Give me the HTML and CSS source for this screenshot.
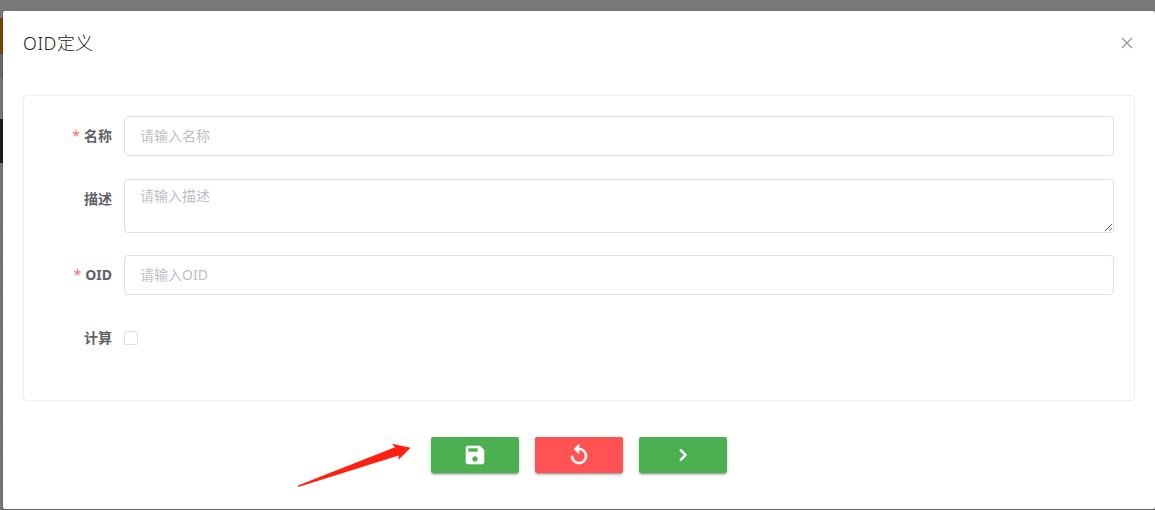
FILE: index.html
```
<!DOCTYPE html>
<html lang="zh-CN">
<head>
<meta charset="utf-8">
<title>OID定义</title>
<link rel="stylesheet" href="styles.css">
</head>
<body>
<main class="dialog">
  <header class="dialog-header">
    <h1 class="title"><span class="latin">OID</span>定义</h1>
    <button class="close" aria-label="关闭"><svg width="12" height="12" viewBox="0 0 12 12"><path d="M1 1l10 10M11 1L1 11" fill="none" stroke="#909399" stroke-width="1.2"/></svg></button>
  </header>
  <form class="card">
    <div class="row row-name">
      <label class="label required" for="name">名称</label>
      <input class="field" id="name" placeholder="请输入名称">
    </div>
    <div class="row row-desc">
      <label class="label" for="desc">描述</label>
      <textarea class="field area" id="desc" placeholder="请输入描述"></textarea>
    </div>
    <div class="row row-oid">
      <label class="label required" for="oid">OID</label>
      <input class="field" id="oid" placeholder="请输入OID">
    </div>
    <div class="row row-calc">
      <label class="label" for="calc">计算</label>
      <input class="check" type="checkbox" id="calc">
    </div>
  </form>
  <footer class="actions">
    <button class="btn green" aria-label="保存"><svg class="icon" width="24" height="24" viewBox="0 0 24 24"><path d="M17 3H5c-1.110 0-2 .9-2 2v14c0 1.100.89 2 2 2h14c1.100 0 2-.9 2-2V7l-4-4zm-5 16c-1.660 0-3-1.340-3-3s1.340-3 3-3 3 1.340 3 3-1.340 3-3 3zm3-10H5V5h10v4z"/></svg></button>
    <button class="btn red" aria-label="重置"><svg class="icon" width="24" height="24" viewBox="0 0 24 24"><path d="M12 5V1L7 6l5 5V7c3.310 0 6 2.690 6 6s-2.690 6-6 6-6-2.690-6-6H4c0 4.420 3.580 8 8 8s8-3.580 8-8-3.580-8-8-8z"/></svg></button>
    <button class="btn green" aria-label="下一步"><svg class="icon" width="24" height="24" viewBox="0 0 24 24"><path d="M10 6L8.590 7.410 13.170 12l-4.580 4.590L10 18l6-6z"/></svg></button>
  </footer>
  <svg class="arrow" width="114" height="46" viewBox="0 0 114 46"><path fill="#ff2010" d="M0 42.500L97 4.300 94 .8 112.500 4.800 100.500 16.700 100.700 12.600 .3 44z"/></svg>
</main>
</body>
</html>
```
FILE: styles.css
```
* { box-sizing: border-box; }
body {
  margin: 0;
  padding: 11px 0 1px 3px;
  height: 510px;
  overflow: hidden;
  font-family: "Noto Sans", "Noto Sans CJK SC", sans-serif;
  font-size: 14px;
  background:
    linear-gradient(#7b4600, #7b4600) 0 18px / 3px 36px no-repeat,
    linear-gradient(#6c6c6c, #6c6c6c) 0 54px / 3px 24px no-repeat,
    linear-gradient(#1c1c1c, #1c1c1c) 0 119px / 3px 44px no-repeat,
    repeating-linear-gradient(#787878 0 3px, #6b6b6b 3px 4px, #787878 4px 32px) 0 192px / 3px 318px no-repeat,
    #787878;
}
.dialog {
  position: relative;
  height: 498px;
  background: #fff;
  border-radius: 2px;
  box-shadow: 0 1px 3px rgba(0, 0, 0, .3);
}
.dialog-header {
  display: flex;
  justify-content: space-between;
  align-items: center;
  height: 64px;
  padding: 0 22px 0 20px;
}
.title { margin: 0; font-size: 18px; line-height: 24px; font-weight: 300; color: #202123; }
.latin { letter-spacing: .6px; }
.close { display: flex; padding: 0; border: 0; background: none; }
.card {
  width: 1112px;
  height: 306px;
  margin: 20px 0 0 20px;
  padding-top: 20px;
  border: 1px solid #ebeef5;
  border-radius: 4px;
}
.row { display: flex; height: 40px; padding-right: 20px; }
.row-name { margin-bottom: 23px; }
.row-desc { height: 54px; margin-bottom: 22px; }
.row-oid { margin-bottom: 23px; }
.row-calc { align-items: center; }
.label {
  width: 100px;
  padding-right: 12px;
  line-height: 40px;
  text-align: right;
  font-weight: 700;
  color: #606266;
}
.required::before { content: "*"; margin-right: 4px; color: #f56c6c; font-weight: 400; }
.field {
  flex: 1;
  min-width: 0;
  padding: 0 15px 2px;
  border: 1px solid #dcdfe6;
  border-radius: 4px;
  font: inherit;
  background: #fff;
}
.area { display: block; height: 54px; padding: 5px 15px; line-height: 21px; resize: vertical; }
.field::placeholder { color: #bbbfc8; }
.check {
  appearance: none;
  width: 14px;
  height: 14px;
  margin: 0;
  border: 1px solid #dcdfe6;
  border-radius: 2px;
}
.actions { display: flex; justify-content: center; gap: 16px; margin-top: 36px; }
.btn {
  display: flex;
  align-items: center;
  justify-content: center;
  width: 88px;
  height: 36px;
  padding: 0;
  border: 0;
  border-radius: 2px;
  box-shadow: 0 3px 1px -2px rgba(0, 0, 0, .2), 0 2px 2px rgba(0, 0, 0, .14), 0 1px 5px rgba(0, 0, 0, .12);
}
.icon { fill: #fff; stroke: #fff; stroke-width: .6; }
.green { background: #4caf50; }
.red { background: #ff5252; }
.arrow { position: absolute; left: 295px; top: 432px; }
```
